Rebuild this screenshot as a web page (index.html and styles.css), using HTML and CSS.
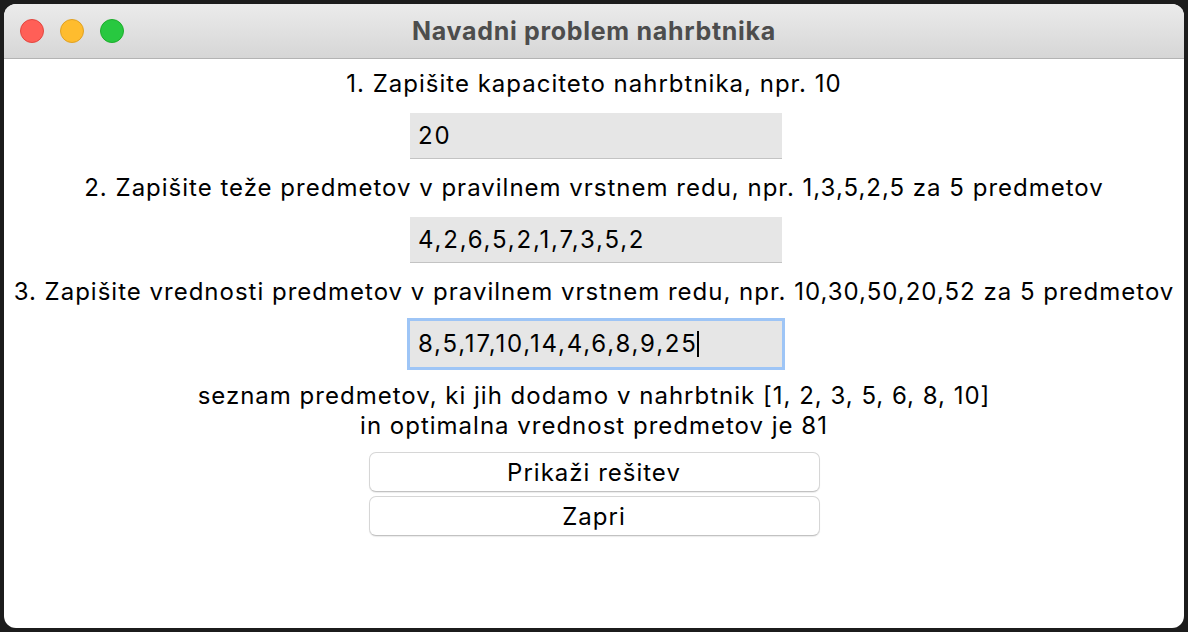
FILE: index.html
```html
<!DOCTYPE html>
<html lang="sl">
<head>
<meta charset="utf-8">
<title>Navadni problem nahrbtnika</title>
<link rel="stylesheet" href="styles.css">
</head>
<body>
<div class="window">
  <div class="titlebar">
    <div class="lights">
      <span class="light red"></span>
      <span class="light yellow"></span>
      <span class="light green"></span>
    </div>
    <div class="title">Navadni problem nahrbtnika</div>
    <div class="spacer"></div>
  </div>
  <div class="content">
    <div class="label">1. Zapišite kapaciteto nahrbtnika, npr. 10</div>
    <div class="entry"><span class="val">20</span></div>
    <div class="label">2. Zapišite teže predmetov v pravilnem vrstnem redu, npr. 1,3,5,2,5 za 5 predmetov</div>
    <div class="entry"><span class="val">4,2,6,5,2,1,7,3,5,2</span></div>
    <div class="label">3. Zapišite vrednosti predmetov v pravilnem vrstnem redu, npr. 10,30,50,20,52 za 5 predmetov</div>
    <div class="entry focused"><span class="val">8,5,17,10,14,4,6,8,9,25</span><span class="caret"></span></div>
    <div class="result">seznam predmetov, ki jih dodamo v nahrbtnik [1, 2, 3, 5, 6, 8, 10]<br>in optimalna vrednost predmetov je 81</div>
    <div class="buttons">
      <button class="btn">Prikaži rešitev</button>
      <button class="btn">Zapri</button>
    </div>
  </div>
</div>
</body>
</html>
```

FILE: styles.css
```css
html, body {
  margin: 0;
  padding: 0;
  background: #1c1c1c;
}
body {
  width: 1188px;
  height: 632px;
  padding: 4px;
  box-sizing: border-box;
  font-family: Inter, "Liberation Sans", sans-serif;
  color: #000;
}
.window {
  width: 1180px;
  height: 624px;
  background: #fff;
  border-radius: 12px;
  overflow: hidden;
  display: flex;
  flex-direction: column;
}
.titlebar {
  height: 54px;
  flex: 0 0 54px;
  background: linear-gradient(#ebebeb, #d6d6d6);
  border-bottom: 1px solid #b3b3b3;
  display: grid;
  grid-template-columns: 1fr auto 1fr;
  align-items: center;
}
.lights {
  display: flex;
  gap: 16px;
  padding-left: 16px;
}
.light {
  width: 22px;
  height: 22px;
  border-radius: 50%;
  border: 1px solid transparent;
}
.red { background: #ff5f57; border-color: #e2463f; }
.yellow { background: #febc2e; border-color: #e0a123; }
.green { background: #28c840; border-color: #1dad2b; }
.title {
  font-size: 25px;
  font-weight: 700;
  color: #4d4d4d;
  letter-spacing: 0.7px;
}
.content {
  display: flex;
  flex-direction: column;
  align-items: center;
  padding-top: 10px;
  font-size: 24px;
  letter-spacing: 1px;
}
.label {
  line-height: 30px;
  white-space: nowrap;
}
.entry {
  width: 372px;
  height: 46px;
  box-sizing: border-box;
  background: #e6e6e6;
  border-bottom: 1px solid #c3c3c3;
  margin: 14px 0 14px 4px;
  padding-left: 8px;
  display: flex;
  align-items: center;
  line-height: 30px;
  letter-spacing: 1.8px;
}
.entry.focused {
  border-bottom: none;
  box-shadow: 0 0 0 3px #9ec5f6;
}
.caret {
  width: 2px;
  height: 26px;
  background: #000;
  margin-left: -1px;
}
.result {
  margin-top: 0;
  text-align: center;
  line-height: 30px;
}
.buttons {
  margin-top: 11px;
  display: flex;
  flex-direction: column;
  gap: 4px;
}
.btn {
  width: 451px;
  height: 40px;
  background: #fff;
  border: 1px solid #d6d6d6;
  border-bottom-color: #c2c2c2;
  border-radius: 7px;
  box-shadow: 0 1px 1px rgba(0, 0, 0, 0.08);
  font-family: Inter, "Liberation Sans", sans-serif;
  font-size: 24px;
  letter-spacing: 1px;
  color: #000;
  padding: 0;
}
```
